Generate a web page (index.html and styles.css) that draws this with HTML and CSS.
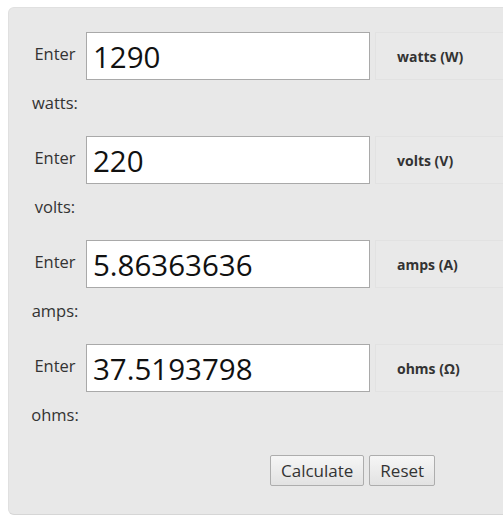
FILE: index.html
```html
<!DOCTYPE html>
<html>
<head>
<meta charset="utf-8">
<link rel="stylesheet" href="styles.css">
</head>
<body>
<form class="panel">
  <div class="row">
    <div class="lbl top">Enter</div>
    <input class="field" type="text" value="1290">
    <div class="unit">watts (W)</div>
    <div class="lbl bottom">watts:</div>
  </div>
  <div class="row">
    <div class="lbl top">Enter</div>
    <input class="field" type="text" value="220">
    <div class="unit">volts (V)</div>
    <div class="lbl bottom">volts:</div>
  </div>
  <div class="row">
    <div class="lbl top">Enter</div>
    <input class="field" type="text" value="5.86363636">
    <div class="unit">amps (A)</div>
    <div class="lbl bottom">amps:</div>
  </div>
  <div class="row last">
    <div class="lbl top">Enter</div>
    <input class="field" type="text" value="37.5193798">
    <div class="unit">ohms (Ω)</div>
    <div class="lbl bottom">ohms:</div>
  </div>
  <div class="actions">
    <button type="button" class="btn">Calculate</button>
    <button type="button" class="btn">Reset</button>
  </div>
</form>
</body>
</html>
```
FILE: styles.css
```css
html, body {
  margin: 0;
  padding: 0;
  overflow: hidden;
  background: #ffffff;
}
body {
  padding: 7px 0 0 8px;
  font-family: "Open Sans", "DejaVu Sans", sans-serif;
  color: #333;
}
.panel {
  width: 520px;
  background: #e8e8e8;
  border: 1px solid #e0e0e0;
  border-bottom-color: #d6d6d6;
  border-radius: 6px;
  padding: 24px 0 27px 15px;
  box-sizing: border-box;
  height: 508px;
}
.row {
  display: grid;
  grid-template-columns: 62px 284px 1fr;
  grid-template-rows: 48px 56px;
}
.row .lbl {
  font-size: 16.5px;
  line-height: 22px;
  text-align: center;
  color: #333;
}
.row .lbl.top {
  grid-column: 1;
  grid-row: 1;
  align-self: center;
  margin-top: -5px;
}
.row .lbl.bottom {
  grid-column: 1;
  grid-row: 2;
  padding-top: 12px;
}
.row.last {
  grid-template-rows: 48px 63px;
}
.field {
  grid-column: 2;
  grid-row: 1;
  box-sizing: border-box;
  width: 284px;
  height: 48px;
  margin: 0;
  border: 1px solid #a9a9a9;
  background: #fff;
  font-family: "Open Sans", "DejaVu Sans", sans-serif;
  font-size: 29.5px;
  color: #111;
  padding: 0 6px;
  outline: none;
}
.unit {
  grid-column: 3;
  grid-row: 1;
  margin-left: 5px;
  box-sizing: border-box;
  height: 48px;
  display: flex;
  align-items: center;
  padding-left: 21px;
  font-size: 14px;
  font-weight: bold;
  color: #333;
  background: #e9e9e9;
  border: 1px solid #e2e2e2;
  border-right: none;
}
.actions {
  display: flex;
  gap: 5px;
  padding-left: 246px;
}
.btn {
  height: 31px;
  font-family: "Open Sans", "DejaVu Sans", sans-serif;
  font-size: 17px;
  color: #333;
  padding: 0 10px;
  border: 1px solid #adadad;
  border-radius: 2px;
  background: linear-gradient(#f6f6f6, #e2e2e2);
  margin: 0;
}
```
